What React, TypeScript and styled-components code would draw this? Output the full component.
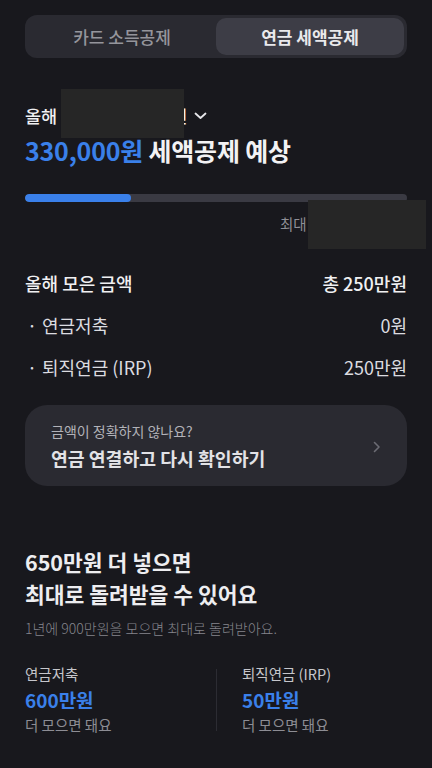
import React, { FC } from 'react'
import styled, { createGlobalStyle } from 'styled-components'

const GlobalStyle = createGlobalStyle`
  html, body {
    margin: 0;
    padding: 0;
    background: #18181d;
  }
  body {
    font-family: 'Noto Sans CJK KR', 'Noto Sans', sans-serif;
    color: #ececef;
    -webkit-font-smoothing: antialiased;
  }
`

const Page = styled.div`
  position: relative;
  width: 432px;
  min-height: 768px;
  padding: 0 25px;
  box-sizing: border-box;
  overflow: hidden;
`

const Segment = styled.div`
  margin-top: 15px;
  height: 43px;
  padding: 3px;
  box-sizing: border-box;
  display: grid;
  grid-template-columns: 1fr 1fr;
  background: #2a2a31;
  border-radius: 12px;
`

const Tab = styled.div<{ $active?: boolean }>`
  display: flex;
  align-items: center;
  justify-content: center;
  border-radius: 10px;
  font-size: 17px;
  font-weight: ${(p) => (p.$active ? 700 : 500)};
  color: ${(p) => (p.$active ? '#e9e9ec' : '#95959c')};
  background: ${(p) => (p.$active ? '#3d3d46' : 'transparent')};
`

const Header = styled.section`
  position: relative;
  margin-top: 43px;
`

const YearLine = styled.div`
  display: flex;
  align-items: center;
  height: 28px;
  font-size: 17.5px;
  font-weight: 500;
  color: #f0f0f2;
`

const Amount = styled.span`
  margin-left: 36px;
  padding-left: 78px;
`

const Chevron = styled.svg`
  margin-left: 7px;
  margin-top: 1px;
`

const Title = styled.h1`
  margin: 4px 0 0;
  font-size: 25px;
  line-height: 34px;
  font-weight: 700;
  color: #f2f2f4;
  letter-spacing: -0.2px;
`

const Blue = styled.span`
  color: #3a80ea;
`

const Redaction = styled.div<{ $top: number; $left: number; $w: number; $h: number }>`
  position: absolute;
  top: ${(p) => p.$top}px;
  left: ${(p) => p.$left}px;
  width: ${(p) => p.$w}px;
  height: ${(p) => p.$h}px;
  background: #262626;
`

const Track = styled.div`
  margin-top: 27px;
  height: 8px;
  border-radius: 4px;
  background: #3a3a43;
  overflow: hidden;
`

const Fill = styled.div`
  height: 100%;
  border-radius: 4px;
  background: #3a80ea;
`

const MaxRow = styled.div`
  position: relative;
  margin-top: 12px;
  height: 20px;
  padding-left: 255px;
  font-size: 14.5px;
  line-height: 20px;
  color: #8f8f96;
`

const Summary = styled.div`
  margin-top: 36px;
  display: flex;
  flex-direction: column;
  gap: 16px;
`

const Row = styled.div<{ $main?: boolean }>`
  display: flex;
  justify-content: space-between;
  align-items: center;
  height: 26px;
  font-size: 18px;
  font-weight: ${(p) => (p.$main ? 500 : 400)};
  color: ${(p) => (p.$main ? '#f0f0f2' : '#dcdce0')};
`

const Bullet = styled.span`
  display: inline-block;
  width: 15px;
  padding-left: 2px;
`

const Card = styled.div`
  margin-top: 25px;
  height: 81px;
  padding: 16px 26px 0 26px;
  box-sizing: border-box;
  display: flex;
  align-items: center;
  justify-content: space-between;
  background: #2a2a31;
  border-radius: 22px;
`

const CardText = styled.div`
  display: flex;
  flex-direction: column;
  gap: 4px;
  align-self: flex-start;
`

const CardHint = styled.div`
  font-size: 14px;
  line-height: 20px;
  color: #b2b2b8;
`

const CardAction = styled.div`
  font-size: 18.3px;
  line-height: 26px;
  font-weight: 700;
  color: #e2e2e6;
`

const Arrow = styled.svg`
  margin-top: -14px;
`

const Suggest = styled.h2`
  margin: 60px 0 0;
  font-size: 21.5px;
  line-height: 32px;
  font-weight: 700;
  color: #ededf0;
`

const Note = styled.p`
  margin: 8px 0 0;
  font-size: 14px;
  line-height: 20px;
  color: #85858c;
  font-weight: 300;
`

const Columns = styled.div`
  margin-top: 26px;
  display: grid;
  grid-template-columns: 191px 1px 1fr;
`

const Column = styled.div<{ $right?: boolean }>`
  padding-left: ${(p) => (p.$right ? '25px' : '0')};
`

const Divider = styled.div`
  margin: 5px 0 4px;
  background: #2c2c33;
`

const ColLabel = styled.div`
  font-size: 14.5px;
  line-height: 20px;
  color: #c6c6cb;
`

const ColValue = styled.div`
  margin-top: 3px;
  font-size: 19px;
  line-height: 26px;
  font-weight: 700;
  color: #3a80ea;
`

const ColSub = styled.div`
  margin-top: 2px;
  font-size: 14.5px;
  line-height: 20px;
  color: #8d8d94;
`

const Goal: FC<{ label: string; value: string; right?: boolean }> = ({ label, value, right }) => (
  <Column $right={right}>
    <ColLabel>{label}</ColLabel>
    <ColValue>{value}</ColValue>
    <ColSub>더 모으면 돼요</ColSub>
  </Column>
)

export default function App() {
  return (
    <Page>
      <GlobalStyle />
      <Segment>
        <Tab>카드 소득공제</Tab>
        <Tab $active>연금 세액공제</Tab>
      </Segment>

      <Header>
        <YearLine>
          올해
          <Amount>원</Amount>
          <Chevron width="13" height="8" viewBox="0 0 13 8" fill="none">
            <path d="M1.5 1.5L6.5 6L11.5 1.5" stroke="#e6e6ea" strokeWidth="1.8" strokeLinecap="round" strokeLinejoin="round" />
          </Chevron>
        </YearLine>
        <Title>
          <Blue>330,000원</Blue> 세액공제 예상
        </Title>
        <Redaction $top={-12} $left={36} $w={123} $h={49} />
      </Header>

      <Track>
        <Fill style={{ width: `${(106 / 382) * 100}%` }} />
      </Track>
      <MaxRow>
        최대
        <Redaction $top={-14} $left={283} $w={118} $h={49} />
      </MaxRow>

      <Summary>
        <Row $main>
          <span>올해 모은 금액</span>
          <span>총 250만원</span>
        </Row>
        <Row>
          <span>
            <Bullet>·</Bullet>연금저축
          </span>
          <span>0원</span>
        </Row>
        <Row>
          <span>
            <Bullet>·</Bullet>퇴직연금 (IRP)
          </span>
          <span>250만원</span>
        </Row>
      </Summary>

      <Card>
        <CardText>
          <CardHint>금액이 정확하지 않나요?</CardHint>
          <CardAction>연금 연결하고 다시 확인하기</CardAction>
        </CardText>
        <Arrow width="8" height="12" viewBox="0 0 8 12" fill="none">
          <path d="M1.5 1.5L6 6L1.5 10.5" stroke="#6c6c74" strokeWidth="1.6" strokeLinecap="round" strokeLinejoin="round" />
        </Arrow>
      </Card>

      <Suggest>
        650만원 더 넣으면
        <br />
        최대로 돌려받을 수 있어요
      </Suggest>
      <Note>1년에 900만원을 모으면 최대로 돌려받아요.</Note>

      <Columns>
        <Goal label="연금저축" value="600만원" />
        <Divider />
        <Goal label="퇴직연금 (IRP)" value="50만원" right />
      </Columns>
    </Page>
  )
}
